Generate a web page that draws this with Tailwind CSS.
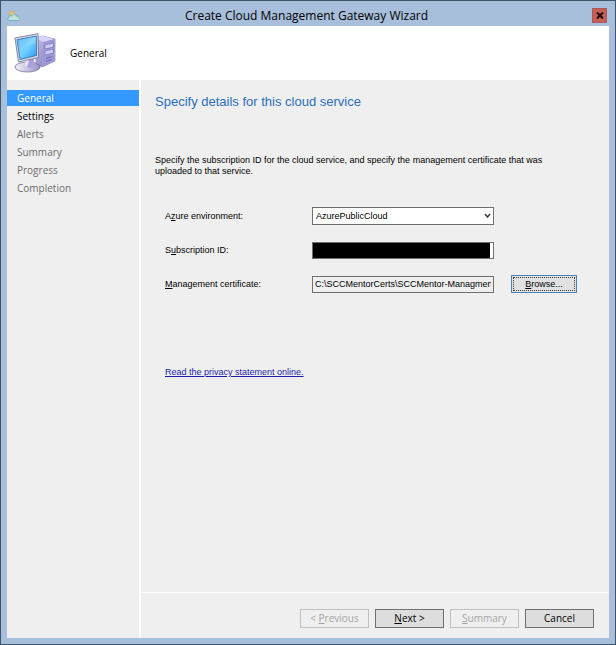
<!DOCTYPE html>
<html lang="en">
<head>
    <meta charset="UTF-8" />
    <meta name="viewport" content="width=device-width, initial-scale=1" />
    <title>Create Cloud Management Gateway Wizard</title>
    <script src="https://cdn.jsdelivr.net/npm/@tailwindcss/browser@4"></script>
</head>
<body class="min-h-screen flex flex-col bg-[#a8bfdc] border border-[#3d566c] px-[6px] pb-[6px] font-['Open_Sans','Noto_Sans',sans-serif] text-[10px] text-black">

<header class="h-[25px] shrink-0 flex items-center justify-between pt-1">
    <svg class="w-[14px] h-3" viewBox="0 0 14 12" aria-hidden="true">
        <circle cx="5" cy="4" r="3" fill="#e0bf83" stroke="#c9a46c" stroke-width=".6" />
        <path d="M2 10.5C.4 10.2.3 7.6 2 7.2c.3-1.4 1.700-1.800 2.600-1.200C6 3.600 9.300 4.200 9.600 6.400c1.600-.3 3 .8 3 2.300 0 1.100-.7 1.800-1.700 1.800z" fill="#c1ddd5" stroke="#62b9cb" />
    </svg>
    <h1 class="text-[12px]">Create Cloud Management Gateway Wizard</h1>
    <button type="button" aria-label="Close" class="size-[15px] mr-[2px] flex items-center justify-center bg-[#c75f57] border border-[#a65a5c]">
        <svg class="w-2 h-[7px]" viewBox="0 0 8 7" aria-hidden="true">
            <path d="M1 .5l6 6M7 .5l-6 6" stroke="#1b0d0d" stroke-width="2" />
        </svg>
    </button>
</header>

<section class="h-[54px] shrink-0 flex items-center gap-[14px] bg-white pl-[7px]">
    <!-- monitor and tower -->
    <svg class="w-[42px] h-10" viewBox="0 0 42 40" aria-hidden="true">
        <defs>
            <linearGradient id="screen" x1="0" y1="0" x2="1" y2="1">
                <stop offset="0" stop-color="#3fa6f0" />
                <stop offset=".5" stop-color="#74d4ff" />
                <stop offset="1" stop-color="#2c8ff0" />
            </linearGradient>
            <linearGradient id="tower" x1="0" y1="0" x2="1" y2="1">
                <stop offset="0" stop-color="#c5c1ee" />
                <stop offset="1" stop-color="#7772b4" />
            </linearGradient>
            <linearGradient id="base" x1="0" y1="0" x2="1" y2="0">
                <stop offset="0" stop-color="#f3f2fb" />
                <stop offset="1" stop-color="#9792c7" />
            </linearGradient>
        </defs>
        <path d="M22 5l6-2 13 3v22L28 34l-6-3z" fill="url(#tower)" stroke="#8c87bd" stroke-width=".7" />
        <path d="M22 5l6-2 13 3-12 3z" fill="#d9d6f5" />
        <path d="M29 9l12-3v22L28 33.500z" fill="#9f9ad6" />
        <path d="M31 12l8.500-2v4L31 16zM31 18l8.500-2v4L31 22z" fill="#cfccf4" stroke="#6e69a8" stroke-width=".6" />
        <path d="M32 25.500l6-2M32 28.500l6-2" stroke="#615b9c" stroke-width=".8" />
        <ellipse cx="13.500" cy="34" rx="12.500" ry="5" fill="url(#base)" stroke="#77738f" stroke-width=".8" />
        <path d="M11 25l9-2c-.5 4 .5 7 2 9-3 3-9 3-12 1 1.500-2 1.500-5 1-8z" fill="#a8a1dd" />
        <path d="M11 25l4-1c0 4-.5 7-2 10l-3-1c1.500-2 1.500-5 1-8z" fill="#e5e2f8" />
        <path d="M1 5L24 .7 24.500 24.500 4.500 29z" fill="#dedff2" stroke="#77798f" stroke-width=".9" />
        <path d="M3 6.700L22.300 3l.2 19.500L6 26.500z" fill="url(#screen)" stroke="#2f64a8" stroke-width=".8" />
        <path d="M3.500 7L22 3.500v7C15 11 9 14 5.500 20z" fill="#fff" opacity=".15" />
    </svg>
    <h2>General</h2>
</section>

<div class="grow flex bg-[#efefef]">
    <nav class="w-[132px] shrink-0 pt-[10px]">
        <ul class="flex flex-col gap-[2px] leading-[16px] text-[#6d6d6d]">
            <li class="pl-[10px] bg-[#3399ff] text-white" aria-current="step">General</li>
            <li class="pl-[10px] text-black">Settings</li>
            <li class="pl-[10px]">Alerts</li>
            <li class="pl-[10px]">Summary</li>
            <li class="pl-[10px]">Progress</li>
            <li class="pl-[10px]">Completion</li>
        </ul>
    </nav>

    <div class="grow min-w-0 flex flex-col border-l-2 border-white">
        <main class="grow pl-[14px] pr-8 pt-3 font-['Liberation_Sans',sans-serif] text-[9px] leading-[11px]">
            <h2 class="text-[13px] leading-5 text-[#2a6ebb]">Specify details for this cloud service</h2>
            <p class="mt-[43px] max-w-[400px]">Specify the subscription ID for the cloud service, and specify the management certificate that was uploaded to that service.</p>

            <form id="cloud-service" class="mt-[30px] ml-[10px] grid grid-cols-[147px_182px_66px] auto-rows-[18px] gap-y-4 items-center">
                <label for="environment">A<u>z</u>ure environment:</label>
                <div class="relative">
                    <select id="environment" class="block w-full h-[18px] appearance-none border border-[#707070] bg-white pl-[3px]">
                        <option>AzurePublicCloud</option>
                    </select>
                    <svg class="absolute right-[3px] top-[6px] w-[7px] h-[6px] pointer-events-none" viewBox="0 0 7 6" aria-hidden="true">
                        <path d="M1 1l2.500 3L6 1" fill="none" stroke="#404040" stroke-width="1.500" />
                    </svg>
                </div>
                <span></span>

                <label for="subscription">S<u>u</u>bscription ID:</label>
                <!-- value is blacked out -->
                <div class="flex h-[17px] border border-[#707070] bg-white pr-[3px]">
                    <input id="subscription" type="text" class="w-full bg-black text-black" />
                </div>
                <span></span>

                <label for="certificate"><u>M</u>anagement certificate:</label>
                <input id="certificate" type="text" readonly value="C:\SCCMentorCerts\SCCMentor-ManagmentCert.pfx" class="w-full h-[17px] border border-[#707070] px-[2px]" />
                <button type="button" class="h-[18px] ml-[17px] -mr-[17px] border border-[#4a84ad] bg-[#e1e1e1] p-px">
                    <span class="flex h-full items-center justify-center border border-dotted border-[#404040]"><span><u>B</u>rowse...</span></span>
                </button>
            </form>

            <a href="#" class="inline-block mt-[74px] ml-[10px] text-[#1c1ca8] underline">Read the privacy statement online.</a>
        </main>

        <footer class="flex justify-end gap-[6px] border-t border-white pt-4 pb-[10px] pr-[15px]">
            <button type="button" disabled class="w-[69px] h-[19px] flex items-center justify-center border border-[#bfbfbf] text-[#a3a3a3]"><span>&lt; <u>P</u>revious</span></button>
            <button type="button" class="w-[69px] h-[19px] flex items-center justify-center border border-[#707070] bg-[#dddddd]"><span><u>N</u>ext &gt;</span></button>
            <button type="button" disabled class="w-[69px] h-[19px] flex items-center justify-center border border-[#bfbfbf] text-[#a3a3a3]"><span><u>S</u>ummary</span></button>
            <button type="button" class="w-[69px] h-[19px] flex items-center justify-center border border-[#707070] bg-[#dddddd]">Cancel</button>
        </footer>
    </div>
</div>

</body>
</html>
